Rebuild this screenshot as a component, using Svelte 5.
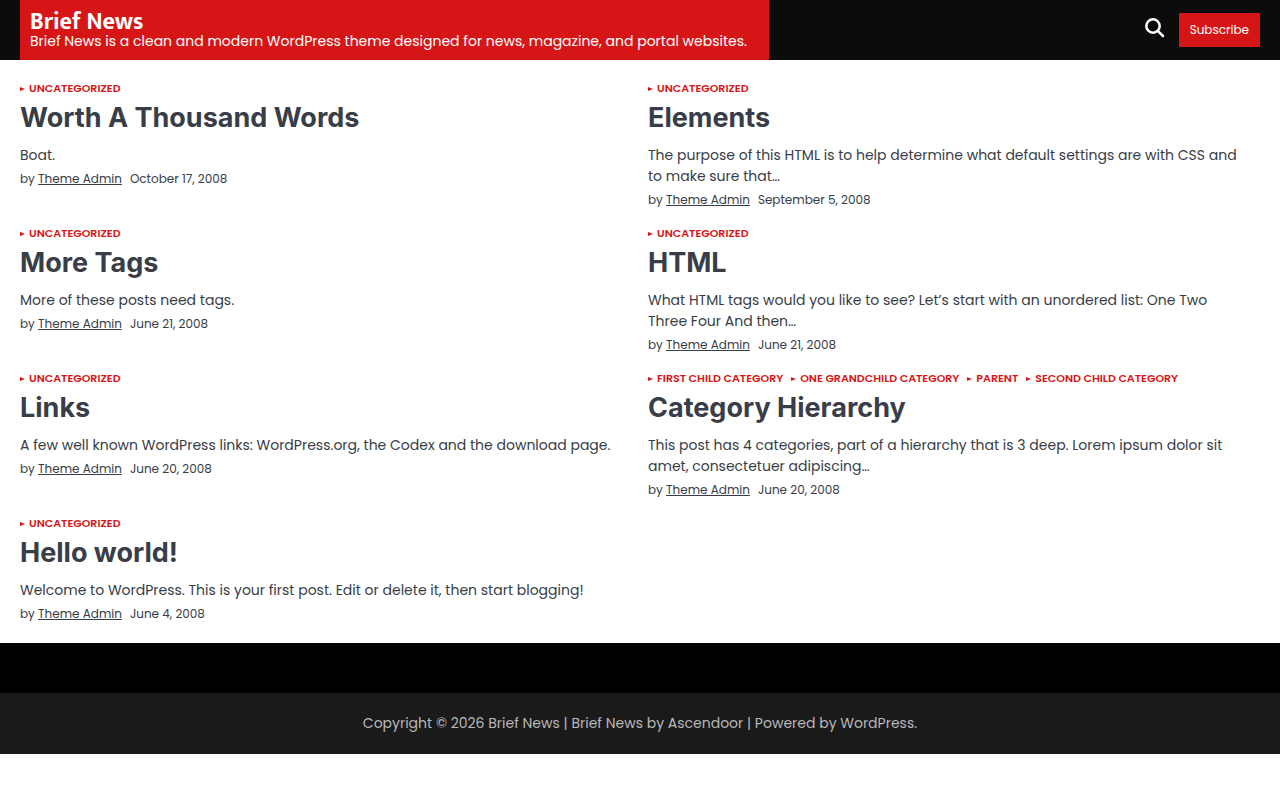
<script>
  let { siteTitle = 'Brief News' } = $props();

  const posts = [
    {
      title: 'Worth A Thousand Words',
      categories: ['Uncategorized'],
      excerpt: 'Boat.',
      date: 'October 17, 2008'
    },
    {
      title: 'Elements',
      categories: ['Uncategorized'],
      excerpt: 'The purpose of this HTML is to help determine what default settings are with CSS and to make sure that…',
      date: 'September 5, 2008'
    },
    {
      title: 'More Tags',
      categories: ['Uncategorized'],
      excerpt: 'More of these posts need tags.',
      date: 'June 21, 2008'
    },
    {
      title: 'HTML',
      categories: ['Uncategorized'],
      excerpt: 'What HTML tags would you like to see? Let’s start with an unordered list: One Two Three Four And then…',
      date: 'June 21, 2008'
    },
    {
      title: 'Links',
      categories: ['Uncategorized'],
      excerpt: 'A few well known WordPress links: WordPress.org, the Codex and the download page.',
      date: 'June 20, 2008'
    },
    {
      title: 'Category Hierarchy',
      categories: ['First Child Category', 'One Grandchild Category', 'Parent', 'Second Child Category'],
      excerpt: 'This post has 4 categories, part of a hierarchy that is 3 deep. Lorem ipsum dolor sit amet, consectetuer adipiscing…',
      date: 'June 20, 2008'
    },
    {
      title: 'Hello world!',
      categories: ['Uncategorized'],
      excerpt: 'Welcome to WordPress. This is your first post. Edit or delete it, then start blogging!',
      date: 'June 4, 2008'
    }
  ];
</script>

<header class="site-header">
  <div class="branding">
    <h1 class="site-title"><a href="#home">{siteTitle}</a></h1>
    <p class="tagline">Brief News is a clean and modern WordPress theme designed for news, magazine, and portal websites.</p>
  </div>
  <div class="actions">
    <button class="search-btn" type="button" aria-label="Search">
      <svg viewBox="0 0 20 20" width="20" height="20" aria-hidden="true">
        <circle cx="8" cy="8" r="6.7" />
        <path d="M12.8 12.8L18 18" />
      </svg>
    </button>
    <a class="subscribe" href="#subscribe">Subscribe</a>
  </div>
</header>

<main class="posts">
  {#each posts as post}
    <article class="post">
      <div class="categories">
        {#each post.categories as category}
          <a href="#category">{category}</a>
        {/each}
      </div>
      <h2 class="post-title"><a href="#post">{post.title}</a></h2>
      <p class="excerpt">{post.excerpt}</p>
      <div class="meta">
        <span>by <a href="#author">Theme Admin</a></span>
        <time>{post.date}</time>
      </div>
    </article>
  {/each}
</main>

<footer class="site-footer">
  <div class="copyright">
    Copyright © 2026 <a href="#home">{siteTitle}</a> | Brief News by <a href="#ascendoor">Ascendoor</a> | Powered by <a href="#wordpress">WordPress</a>.
  </div>
</footer>

<style>
  :global(body) {
    margin: 0;
    background: #fff;
    color: #383d47;
    font-family: Poppins, "Open Sans", sans-serif;
    font-size: 14px;
    line-height: 21px;
  }

  a {
    color: inherit;
    text-decoration: none;
  }

  h1,
  h2,
  p {
    margin: 0;
  }

  .site-header {
    display: flex;
    justify-content: space-between;
    background: #0c0c0c;
    color: #fff;
    padding: 0 20px;
  }

  .branding {
    padding: 12px 22px 10px 10px;
    background: #d61616;
  }

  .site-title {
    font-family: Mukta, Carlito, Lato, sans-serif;
    font-size: 24px;
    font-weight: 700;
    line-height: 20px;
  }

  .tagline {
    line-height: 18px;
  }

  .actions {
    display: flex;
    align-items: center;
    gap: 14px;
  }

  .search-btn {
    padding: 0 0 4px;
    border: 0;
    background: none;
    color: #fff;
    cursor: pointer;
  }

  .search-btn svg {
    display: block;
    fill: none;
    stroke: currentColor;
    stroke-width: 2.5;
    stroke-linecap: round;
  }

  .subscribe {
    padding: 8px 11px;
    background: #d61616;
    font-size: 12px;
    line-height: 18px;
  }

  .posts {
    display: grid;
    grid-template-columns: repeat(2, minmax(0, 1fr));
    gap: 16px;
    padding: 20px;
  }

  .categories {
    display: flex;
    flex-wrap: wrap;
    gap: 0 8px;
    color: #d61616;
    font-size: 11px;
    font-weight: 600;
    line-height: 17px;
    text-transform: uppercase;
  }

  .categories a {
    display: flex;
    align-items: center;
    gap: 4px;
  }

  .categories a::before {
    content: "";
    border: solid transparent;
    border-width: 2px 0 2px 5px;
    border-left-color: currentColor;
  }

  .post-title {
    padding: 3px 0 9px;
    font-family: Inter, sans-serif;
    font-size: 27px;
    font-weight: 700;
    line-height: 36px;
  }

  .excerpt {
    padding-right: 12px;
  }

  .meta {
    display: flex;
    gap: 8px;
    padding-top: 4px;
    font-size: 12px;
    line-height: 18px;
  }

  .meta a {
    text-decoration: underline;
  }

  .site-footer {
    padding-top: 50px;
    background: #000;
  }

  .copyright {
    padding: 20px;
    background: #1a1a1a;
    color: #b8b8b8;
    text-align: center;
  }

  @media (max-width: 700px) {
    .posts {
      grid-template-columns: minmax(0, 1fr);
    }
  }
</style>
